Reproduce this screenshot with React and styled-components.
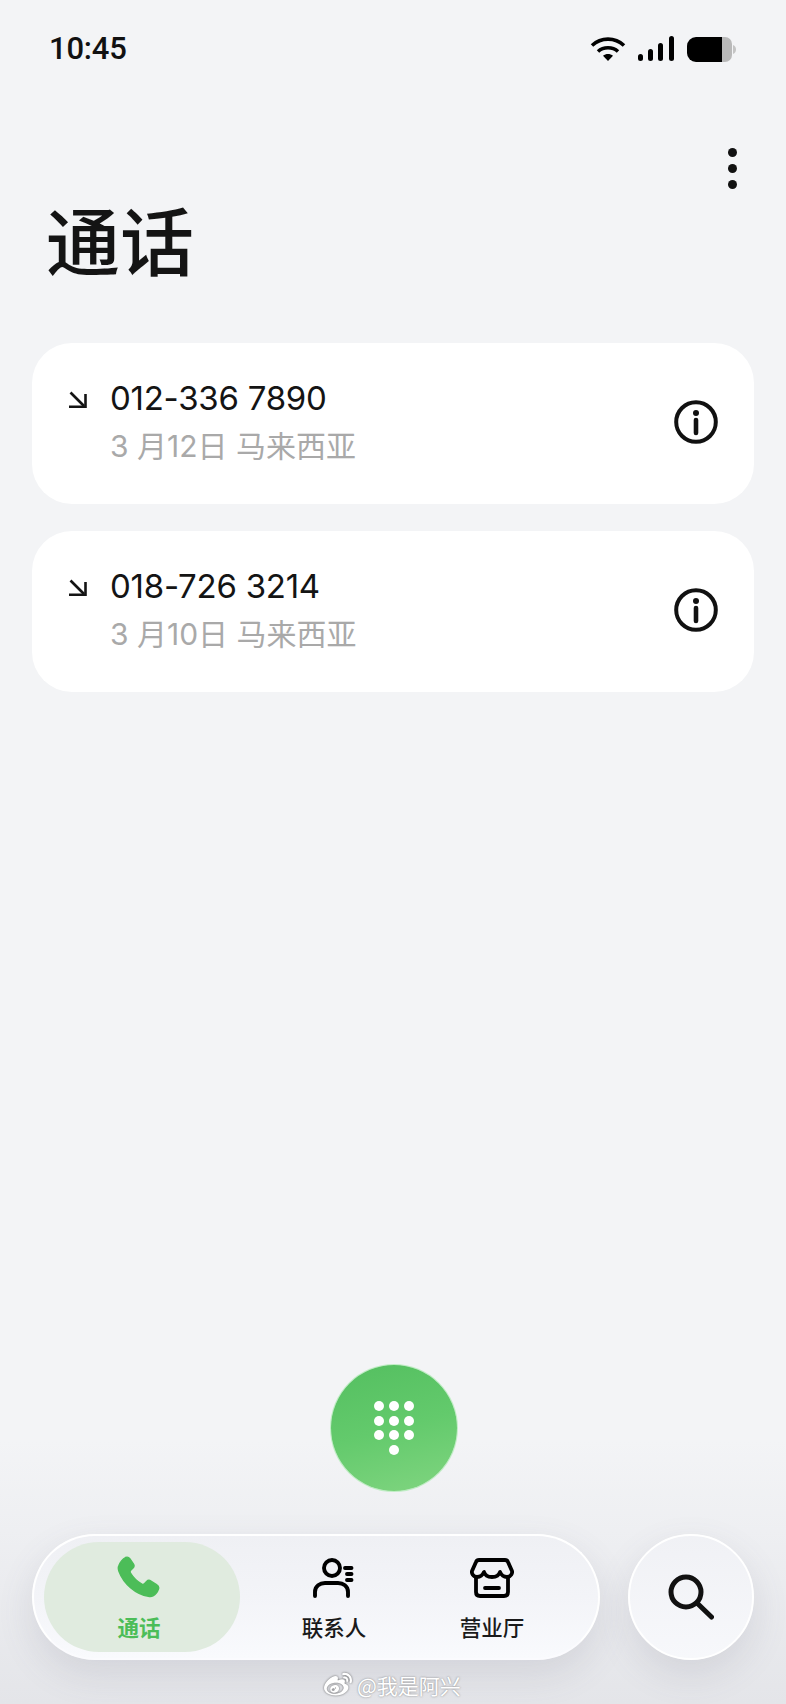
import React from 'react'
import styled, { createGlobalStyle } from 'styled-components'
import { FaWeibo } from 'react-icons/fa'

const GlobalStyle = createGlobalStyle`
  html, body {
    margin: 0;
    padding: 0;
  }
  body {
    font-family: Inter, "Noto Sans CJK SC", sans-serif;
    background: #f3f4f6;
  }
`

const Page = styled.div`
  position: relative;
  width: 786px;
  height: 1704px;
  overflow: hidden;
  display: flex;
  flex-direction: column;
  background: linear-gradient(180deg, #f3f4f6 0, #f3f4f6 1440px, #eeeff2 1530px, #e4e5e9 1704px);
`

const StatusBar = styled.div`
  display: flex;
  align-items: center;
  justify-content: space-between;
  height: 26px;
  margin-top: 36px;
  padding: 0 50px 0 49px;
`

const Time = styled.span`
  font-family: Roboto, sans-serif;
  font-size: 31px;
  font-weight: 500;
  line-height: 26px;
  letter-spacing: -0.2px;
  color: #111;
`

const StatusIcons = styled.div`
  display: flex;
  align-items: center;
  gap: 12px;
`

const BatterySlot = styled.div`
  display: flex;
  margin-left: 1px;
`

const MenuRow = styled.div`
  display: flex;
  justify-content: flex-end;
  padding: 86px 49px 0 0;
`

const MenuDots = styled.div`
  display: flex;
  flex-direction: column;
  gap: 7px;
`

const Dot = styled.span`
  width: 9px;
  height: 9px;
  border-radius: 50%;
  background: #111;
`

const Title = styled.h1`
  margin: 6px 0 0 46px;
  font-family: "Noto Sans CJK SC", sans-serif;
  font-size: 74px;
  font-weight: 500;
  line-height: 86px;
  color: #141414;
`

const CallList = styled.div`
  display: flex;
  flex-direction: column;
  gap: 27px;
  margin-top: 62px;
  padding: 0 32px;
`

const CallCard = styled.div`
  display: flex;
  align-items: center;
  height: 161px;
  padding: 0 36px 3px 37px;
  box-sizing: border-box;
  background: #fff;
  border-radius: 40px;
`

const ArrowSlot = styled.div`
  align-self: flex-start;
  width: 41px;
  padding-top: 48px;
`

const CallText = styled.div`
  flex: 1;
  display: flex;
  flex-direction: column;
  gap: 8px;
`

const Number = styled.span`
  font-size: 33px;
  line-height: 40px;
  letter-spacing: -0.25px;
  color: #141414;
`

const Detail = styled.span`
  font-family: Inter, "Noto Sans CJK SC", sans-serif;
  font-size: 30px;
  line-height: 40px;
  color: #a9a9a9;
`

const BottomArea = styled.div`
  flex: 1;
  display: flex;
  flex-direction: column;
  justify-content: flex-end;
  align-items: stretch;
  padding-bottom: 44px;
`

const DialButton = styled.button`
  align-self: center;
  display: grid;
  grid-template-columns: repeat(3, 10px);
  gap: 4.7px;
  justify-content: center;
  align-content: center;
  width: 126px;
  height: 126px;
  margin: 0 0 43px 2px;
  padding: 0;
  border: none;
  border-radius: 50%;
  background: linear-gradient(165deg, #54bf60 0%, #63ca6c 50%, #80d580 100%);
  box-shadow: 0 0 0 1px rgba(170, 235, 175, 0.7);
`

const Key = styled.span`
  width: 10px;
  height: 10px;
  border-radius: 50%;
  background: #fff;
  grid-column: ${(p) => (p.$center ? 2 : 'auto')};
`

const NavRow = styled.div`
  display: flex;
  justify-content: space-between;
  padding: 0 32px;
`

const TabBar = styled.nav`
  display: flex;
  align-items: center;
  width: 568px;
  height: 126px;
  padding-left: 10px;
  box-sizing: border-box;
  border: 2px solid #fff;
  border-bottom-color: #fbfbfe;
  border-radius: 63px;
  background: linear-gradient(180deg, #eff0f4 0%, #f3f4f8 50%, #f9fafd 100%);
  box-shadow: 0 14px 36px rgba(90, 95, 110, 0.14);
`

const Tab = styled.div`
  display: flex;
  flex-direction: column;
  align-items: center;
  justify-content: flex-start;
  gap: 14px;
  width: ${(p) => (p.$active ? '196px' : '158px')};
  height: 110px;
  margin-right: ${(p) => (p.$active ? '15px' : '0')};
  padding: 14px ${(p) => (p.$active ? '6px' : '0')} 0 0;
  box-sizing: border-box;
  border-radius: 55px;
  background: ${(p) => (p.$active ? '#e0ebdf' : 'transparent')};
`

const TabIcon = styled.div`
  display: flex;
  align-items: center;
  justify-content: center;
  height: 44px;
`

const TabLabel = styled.span`
  font-family: "Noto Sans CJK SC", sans-serif;
  font-size: 21.5px;
  line-height: 26px;
  font-weight: ${(p) => (p.$active ? 700 : 500)};
  color: ${(p) => (p.$active ? '#4cbd58' : '#1a1a1a')};
`

const SearchButton = styled.button`
  display: flex;
  align-items: center;
  justify-content: center;
  width: 126px;
  height: 126px;
  padding: 0;
  border: 2px solid #fff;
  border-radius: 50%;
  background: linear-gradient(180deg, #f0f1f5 0%, #f7f8fb 100%);
  box-shadow: 0 14px 36px rgba(90, 95, 110, 0.14);
`

const Watermark = styled.div`
  position: absolute;
  left: 324px;
  top: 1671px;
  display: flex;
  align-items: center;
  gap: 5px;
  font-family: "Noto Sans CJK SC", sans-serif;
  font-size: 21px;
  line-height: 26px;
  color: #fff;
  text-shadow: 0 0 2px rgba(90, 90, 90, 0.75);
  svg {
    filter: drop-shadow(0 0 1px rgba(70, 70, 70, 0.8));
  }
`

const WifiIcon = () => (
  <svg width="36" height="26" viewBox="0 0 36 26">
    <g fill="none" stroke="#000" strokeWidth="3.6">
      <path d="M2 9.5C11 1 25 1 34 9.5" />
      <path d="M8 15.5C13.5 10.5 22.5 10.500 28 15.5" />
    </g>
    <path d="M18 25l-5-5.2c2.8-2.3 7.2-2.3 10 0z" fill="#000" />
  </svg>
)

const SignalIcon = () => (
  <svg width="36" height="26" viewBox="0 0 36 26" fill="#000">
    <rect x="0" y="18" width="5" height="7" rx="2.5" />
    <rect x="10" y="13" width="5" height="12" rx="2.5" />
    <rect x="20" y="7" width="5" height="18" rx="2.5" />
    <rect x="31" y="0" width="5" height="25" rx="2.5" />
  </svg>
)

const BatteryIcon = () => (
  <svg width="49" height="25" viewBox="0 0 49 25">
    <path d="M35 0h3a7 7 0 0 1 7 7v11a7 7 0 0 1-7 7h-3z" fill="#b9b9b9" />
    <path d="M46 8c2 .6 3 2.400 3 4.500s-1 3.900-3 4.500z" fill="#c4c4c4" />
    <path d="M9 0h26v25H9a9 9 0 0 1-9-9V9a9 9 0 0 1 9-9z" fill="#000" />
  </svg>
)

const IncomingArrow = () => (
  <svg width="18" height="18" viewBox="0 0 18 18" fill="none" stroke="#141414" strokeWidth="2.6">
    <path d="M1.500 1.500L15 15" />
    <path d="M0 15.700H16.500V3" />
  </svg>
)

const InfoIcon = () => (
  <svg width="44" height="44" viewBox="0 0 44 44" fill="none">
    <circle cx="22" cy="22" r="19.800" stroke="#111" strokeWidth="4" />
    <circle cx="22" cy="13" r="3" fill="#111" />
    <path d="M22 20v13" stroke="#111" strokeWidth="4.600" strokeLinecap="round" />
  </svg>
)

const PhoneIcon = () => (
  <svg width="44" height="44" viewBox="-1 -1 44 44" fill="#4cbd58" stroke="#4cbd58" strokeWidth="1.400" strokeLinejoin="round">
    <path d="M7.500.500C9.300-.300 10.800.300 11.800 1.700l3.600 5.200c1 1.500.8 3-.4 4.200l-2.300 2.200c-.8.800-.8 1.700-.2 2.700 2.800 4.600 6.600 8.400 11.300 11 1 .6 1.900.5 2.600-.3l2.200-2.300c1.200-1.200 2.800-1.400 4.300-.4l5.600 3.700c1.700 1.100 2.700 2.500 2 4.300-.9 2.700-3 5.500-5.500 6.800-1.500.8-3 .8-4.600.4C17.500 37.500 5.500 26.500 1 14.500.300 12.600-.200 10.700.800 8.700 2.100 5.300 4.500 2.200 7.500.500z" />
  </svg>
)

const ContactIcon = () => (
  <svg width="42" height="42" viewBox="0 0 42 42" fill="none" stroke="#000" strokeWidth="3.900" strokeLinecap="round">
    <circle cx="19" cy="11" r="8" />
    <path d="M2 39v-4c0-6 5-9 10-9h13c5 0 10 3 10 9v4" />
    <path d="M32 11h6.500M34 17h4.500M34 23h4.500" />
  </svg>
)

const StoreIcon = () => (
  <svg width="44" height="40" viewBox="0 0 44 40" fill="none" stroke="#000" strokeWidth="3.800" strokeLinejoin="round" strokeLinecap="round">
    <path d="M9 2h26c1.500 0 2.500.8 3 2l4 9c.6 2-1 6-5 6-3.500 0-5.500-1.500-7-5-1 3.500-4 5-8 5s-7-1.500-8-5c-1.500 3.500-3.500 5-7 5-4 0-5.600-4-5-6l4-9c.5-1.200 1.500-2 3-2z" />
    <path d="M6 19v15c0 2.500 1.500 4 4 4h24c2.500 0 4-1.500 4-4V19" />
    <path d="M15 30h14" />
  </svg>
)

const SearchIcon = () => (
  <svg width="46" height="46" viewBox="0 0 46 46" fill="none" stroke="#111" strokeWidth="5" strokeLinecap="round">
    <circle cx="18" cy="18" r="15" />
    <path d="M29.500 29.500L43.500 43" />
  </svg>
)

const calls = [
  { number: '012-336 7890', detail: '3 月12日 马来西亚' },
  { number: '018-726 3214', detail: '3 月10日 马来西亚' },
]

const App = () => {
  return (
    <Page>
      <GlobalStyle />
      <StatusBar>
        <Time>10:45</Time>
        <StatusIcons>
          <WifiIcon />
          <SignalIcon />
          <BatterySlot>
            <BatteryIcon />
          </BatterySlot>
        </StatusIcons>
      </StatusBar>
      <MenuRow>
        <MenuDots>
          <Dot />
          <Dot />
          <Dot />
        </MenuDots>
      </MenuRow>
      <Title>通话</Title>
      <CallList>
        {calls.map((call) => (
          <CallCard key={call.number}>
            <ArrowSlot>
              <IncomingArrow />
            </ArrowSlot>
            <CallText>
              <Number>{call.number}</Number>
              <Detail>{call.detail}</Detail>
            </CallText>
            <InfoIcon />
          </CallCard>
        ))}
      </CallList>
      <BottomArea>
        <DialButton>
          {[...Array(9)].map((_, i) => (
            <Key key={i} />
          ))}
          <Key $center />
        </DialButton>
        <NavRow>
          <TabBar>
            <Tab $active>
              <TabIcon><PhoneIcon /></TabIcon>
              <TabLabel $active>通话</TabLabel>
            </Tab>
            <Tab>
              <TabIcon><ContactIcon /></TabIcon>
              <TabLabel>联系人</TabLabel>
            </Tab>
            <Tab>
              <TabIcon><StoreIcon /></TabIcon>
              <TabLabel>营业厅</TabLabel>
            </Tab>
          </TabBar>
          <SearchButton>
            <SearchIcon />
          </SearchButton>
        </NavRow>
      </BottomArea>
      <Watermark>
        <FaWeibo size={28} />
        <span>@我是阿兴</span>
      </Watermark>
    </Page>
  )
}

export default App
